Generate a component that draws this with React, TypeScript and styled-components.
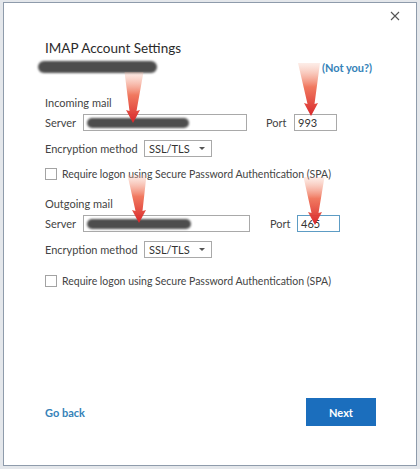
import React from "react";
import styled, { createGlobalStyle } from "styled-components";

const GlobalStyle = createGlobalStyle`
  html, body {
    margin: 0;
    padding: 0;
    background: #e4e7eb;
  }
  body {
    font-family: Lato, "Open Sans", "Liberation Sans", sans-serif;
    color: #3b3b3b;
  }
`;

const Page = styled.div`
  width: 420px;
  height: 469px;
  padding: 2px 3px 3px 3px;
  box-sizing: border-box;
`;

const Dialog = styled.div`
  position: relative;
  height: 100%;
  box-sizing: border-box;
  background: #fff;
  border: 1px solid #8e9bab;
  display: flex;
  flex-direction: column;
  padding: 0 0 0 41px;
`;

const TopBar = styled.div`
  display: flex;
  justify-content: flex-end;
  height: 30px;
  padding: 7px 15px 0 0;
  box-sizing: border-box;
`;

const CloseBtn = styled.button`
  border: 0;
  background: none;
  padding: 0;
  width: 12px;
  height: 12px;
  display: flex;
  align-items: center;
  justify-content: center;
`;

const Title = styled.h1`
  margin: 6px 0 0 0;
  font-size: 13.5px;
  font-weight: 400;
  color: #2b2b2b;
  line-height: 18px;
`;

const AccountRow = styled.div`
  display: flex;
  justify-content: space-between;
  align-items: center;
  height: 16px;
  margin: 2px 44px 0 -7px;
`;

const Redaction = styled.div<{ w: number; h?: number }>`
  width: ${(p) => p.w}px;
  height: ${(p) => p.h ?? 11}px;
  border-radius: 6px;
  background: #4d4d4d;
  filter: blur(1.2px);
`;

const NotYou = styled.a`
  font-size: 11px;
  font-weight: 700;
  color: #3582b8;
  text-decoration: none;
`;

const SectionTitle = styled.div<{ top: number }>`
  margin-top: ${(p) => p.top}px;
  font-size: 11px;
  line-height: 14px;
  color: #444;
`;

const FieldRow = styled.div<{ top: number }>`
  display: flex;
  align-items: center;
  margin-top: ${(p) => p.top}px;
  font-size: 11px;
  color: #444;
`;

const Label = styled.span<{ w: number; gap?: number }>`
  width: ${(p) => p.w}px;
  margin-left: ${(p) => p.gap ?? 0}px;
  flex: none;
`;

const TextBox = styled.div<{ w: number; focused?: boolean }>`
  width: ${(p) => p.w}px;
  height: 17px;
  box-sizing: border-box;
  border: 1px solid ${(p) => (p.focused ? "#5d9cc4" : "#a9a9a9")};
  display: flex;
  align-items: center;
  padding: 0 3px;
  font-size: 11px;
  color: #333;
  flex: none;
`;

const Select = styled.div`
  width: 68px;
  height: 17px;
  box-sizing: border-box;
  border: 1px solid #a9a9a9;
  display: flex;
  align-items: center;
  justify-content: space-between;
  padding: 0 6px 0 4px;
  font-size: 11px;
  color: #333;
`;

const Caret = styled.span`
  width: 0;
  height: 0;
  border-left: 3px solid transparent;
  border-right: 3px solid transparent;
  border-top: 3px solid #555;
`;

const CheckRow = styled.label<{ top: number }>`
  display: flex;
  align-items: center;
  gap: 5px;
  margin-top: ${(p) => p.top}px;
  font-size: 10.5px;
  color: #444;
`;

const Box = styled.span`
  width: 10px;
  height: 10px;
  border: 1px solid #a3a3a3;
  background: #fff;
  flex: none;
`;

const Spacer = styled.div`
  flex: 1;
`;

const Footer = styled.div`
  display: flex;
  justify-content: space-between;
  align-items: center;
  margin: 0 40px 39px 0;
`;

const GoBack = styled.a`
  font-size: 11px;
  font-weight: 700;
  color: #3582b8;
  text-decoration: none;
`;

const NextButton = styled.button`
  width: 70px;
  height: 28px;
  border: 0;
  background: #1b6ebd;
  color: #fff;
  font-family: inherit;
  font-size: 11px;
  font-weight: 700;
`;

const Overlay = styled.svg`
  position: absolute;
  left: -4px;
  top: -3px;
  pointer-events: none;
`;

type Arrow = { x: number; top: number; w: number; tipX: number; tipY: number };

const arrows: Arrow[] = [
  { x: 134, top: 72, w: 19, tipX: 133, tipY: 123 },
  { x: 309, top: 63, w: 22, tipX: 311, tipY: 116 },
  { x: 137, top: 175, w: 19, tipX: 139, tipY: 223 },
  { x: 314, top: 177, w: 21, tipX: 315, tipY: 225 },
];

const arrowPath = (a: Arrow) => {
  const headH = 12;
  const neck = a.tipY - headH;
  return [
    `M ${a.x - a.w / 2} ${a.top}`,
    `L ${a.x + a.w / 2} ${a.top}`,
    `L ${a.tipX + 3.5} ${neck}`,
    `L ${a.tipX + 7} ${neck - 1}`,
    `L ${a.tipX} ${a.tipY}`,
    `L ${a.tipX - 7} ${neck - 1}`,
    `L ${a.tipX - 3.5} ${neck}`,
    "Z",
  ].join(" ");
};

const Arrows = () => (
  <Overlay width="420" height="469" viewBox="0 0 420 469">
    {arrows.map((a, i) => (
      <React.Fragment key={i}>
        <defs>
          <linearGradient id={`ag${i}`} x1="0" y1={a.top} x2="0" y2={a.tipY} gradientUnits="userSpaceOnUse">
            <stop offset="0" stopColor="#f6b8a4" stopOpacity="0.25" />
            <stop offset="0.45" stopColor="#ef6a4e" stopOpacity="0.9" />
            <stop offset="1" stopColor="#d8262a" />
          </linearGradient>
        </defs>
        <path d={arrowPath(a)} fill={`url(#ag${i})`} />
      </React.Fragment>
    ))}
  </Overlay>
);

export default function App() {
  return (
    <Page>
      <GlobalStyle />
      <Dialog>
        <TopBar>
          <CloseBtn aria-label="Close">
            <svg width="10" height="10" viewBox="0 0 10 10">
              <path d="M1 1 L9 9 M9 1 L1 9" stroke="#555" strokeWidth="1.1" />
            </svg>
          </CloseBtn>
        </TopBar>
        <Title>IMAP Account Settings</Title>
        <AccountRow>
          <Redaction w={119} h={12} />
          <NotYou href="#">(Not you?)</NotYou>
        </AccountRow>

        <SectionTitle top={21}>Incoming mail</SectionTitle>
        <FieldRow top={4}>
          <Label w={38}>Server</Label>
          <TextBox w={164}>
            <Redaction w={102} h={10} />
          </TextBox>
          <Label w={28} gap={19}>Port</Label>
          <TextBox w={43}>993</TextBox>
        </FieldRow>
        <FieldRow top={9}>
          <Label w={99}>Encryption method</Label>
          <Select>
            SSL/TLS
            <Caret />
          </Select>
        </FieldRow>
        <CheckRow top={11}>
          <Box />
          Require logon using Secure Password Authentication (SPA)
        </CheckRow>

        <SectionTitle top={17}>Outgoing mail</SectionTitle>
        <FieldRow top={4}>
          <Label w={38}>Server</Label>
          <TextBox w={167}>
            <Redaction w={104} h={10} />
          </TextBox>
          <Label w={27} gap={20}>Port</Label>
          <TextBox w={43} focused>
            465
          </TextBox>
        </FieldRow>
        <FieldRow top={9}>
          <Label w={99}>Encryption method</Label>
          <Select>
            SSL/TLS
            <Caret />
          </Select>
        </FieldRow>
        <CheckRow top={17}>
          <Box />
          Require logon using Secure Password Authentication (SPA)
        </CheckRow>

        <Spacer />
        <Footer>
          <GoBack href="#">Go back</GoBack>
          <NextButton>Next</NextButton>
        </Footer>
        <Arrows />
      </Dialog>
    </Page>
  );
}
